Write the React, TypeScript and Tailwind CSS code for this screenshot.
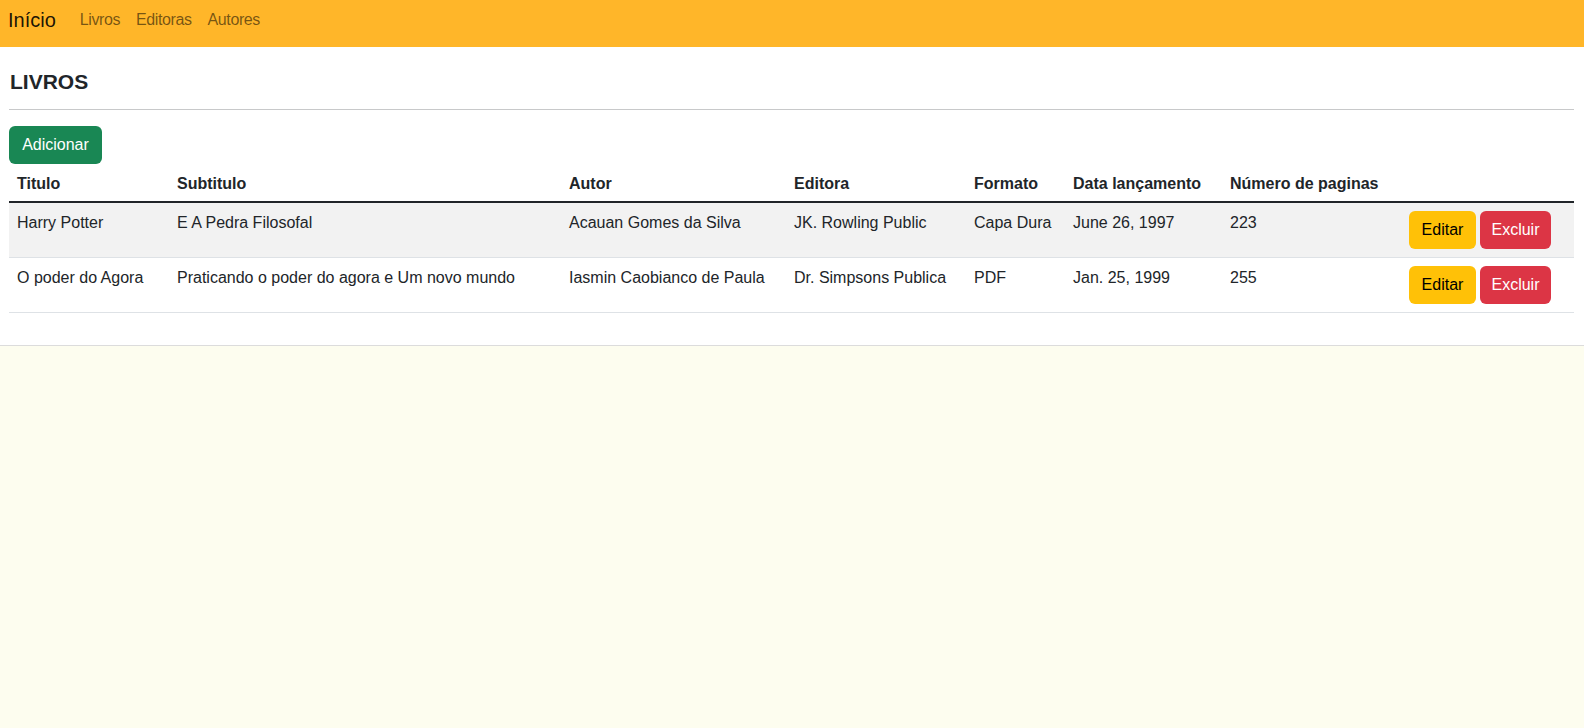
import React from "react";

const livros = [
  {
    id: 1,
    titulo: "Harry Potter",
    subtitulo: "E A Pedra Filosofal",
    autor: "Acauan Gomes da Silva",
    editora: "JK. Rowling Public",
    formato: "Capa Dura",
    data: "June 26, 1997",
    paginas: 223,
  },
  {
    id: 2,
    titulo: "O poder do Agora",
    subtitulo: "Praticando o poder do agora e Um novo mundo",
    autor: "Iasmin Caobianco de Paula",
    editora: "Dr. Simpsons Publica",
    formato: "PDF",
    data: "Jan. 25, 1999",
    paginas: 255,
  },
];

export default function App() {
  return (
    <div className="min-h-screen bg-[#fdfdef] text-[#212529] font-['Liberation_Sans',Arial,sans-serif] text-base">
      <nav className="h-[47px] bg-[#ffb629] flex items-start pt-[5px] pl-2">
        <a href="#" className="text-[20px] leading-[30px] text-black/90 mr-4">Início</a>
        <div className="flex">
          <a href="#" className="px-2 leading-[30px] text-black/55 tracking-[-0.4px]">Livros</a>
          <a href="#" className="px-2 leading-[30px] text-black/55 tracking-[-0.4px]">Editoras</a>
          <a href="#" className="px-2 leading-[30px] text-black/55 tracking-[-0.4px]">Autores</a>
        </div>
      </nav>

      <main className="bg-white border-b border-[#dcdcdc] pl-[9px] pr-[10px] pb-8">
        <h4 className="pt-[21px] pl-px text-[21px] leading-7 font-semibold">LIVROS</h4>
        <hr className="mt-[13px] border-t border-[#c8c9ca]" />
        <button className="mt-4 w-[93px] h-[38px] rounded-md bg-[#198754] text-white leading-6">
          Adicionar
        </button>

        <table className="w-full table-fixed border-collapse text-left">
          <colgroup>
            <col className="w-[160px]" />
            <col className="w-[392px]" />
            <col className="w-[225px]" />
            <col className="w-[180px]" />
            <col className="w-[99px]" />
            <col className="w-[157px]" />
            <col className="w-[179px]" />
            <col className="w-[173px]" />
          </colgroup>
          <thead>
            <tr className="border-b-2 border-[#212529]">
              <th className="px-2 pt-[9px] pb-[7px] leading-[21px] font-bold">Titulo</th>
              <th className="px-2 pt-[9px] pb-[7px] leading-[21px] font-bold">Subtitulo</th>
              <th className="px-2 pt-[9px] pb-[7px] leading-[21px] font-bold">Autor</th>
              <th className="px-2 pt-[9px] pb-[7px] leading-[21px] font-bold">Editora</th>
              <th className="px-2 pt-[9px] pb-[7px] leading-[21px] font-bold">Formato</th>
              <th className="px-2 pt-[9px] pb-[7px] leading-[21px] font-bold whitespace-nowrap">Data lançamento</th>
              <th className="px-2 pt-[9px] pb-[7px] leading-[21px] font-bold whitespace-nowrap">Número de paginas</th>
              <th className="px-2 pt-[9px] pb-[7px]"></th>
            </tr>
          </thead>
          <tbody>
            {livros.map((livro, i) => (
              <tr key={livro.id} className={`border-b border-[#dee2e6] align-top ${i % 2 === 0 ? "bg-[#f2f2f2]" : "bg-white"}`}>
                <td className="p-2 leading-6">{livro.titulo}</td>
                <td className="p-2 leading-6">{livro.subtitulo}</td>
                <td className="p-2 leading-6 whitespace-nowrap">{livro.autor}</td>
                <td className="p-2 leading-6 whitespace-nowrap">{livro.editora}</td>
                <td className="p-2 leading-6 whitespace-nowrap">{livro.formato}</td>
                <td className="p-2 leading-6">{livro.data}</td>
                <td className="p-2 leading-6">{livro.paginas}</td>
                <td className="p-2">
                  <div className="flex gap-1">
                    <button className="w-[67px] h-[38px] rounded-md bg-[#ffc107] text-black leading-6">Editar</button>
                    <button className="w-[71px] h-[38px] rounded-md bg-[#dc3545] text-white leading-6">Excluir</button>
                  </div>
                </td>
              </tr>
            ))}
          </tbody>
        </table>
      </main>
    </div>
  );
}
